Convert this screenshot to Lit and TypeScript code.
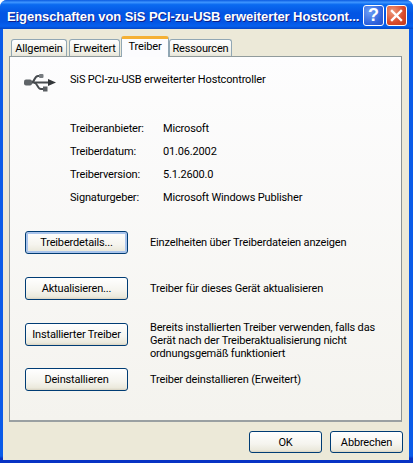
import { LitElement, html, css, svg } from "lit";
import { customElement } from "lit/decorators.js";

const usb = svg`<svg class="usb" width="32" height="20" viewBox="0 0 32 20">
  <g fill="none" stroke="#474b4f" stroke-width="2">
    <path d="M6 8.5H27"/>
    <path d="M7 8.5C11 8.5 10 2 14 2H17"/>
    <path d="M10 8.5C14 9 13 15 17 15H20"/>
  </g>
  <rect x="0" y="5.5" width="8" height="6" rx="2" fill="#5f6468"/>
  <rect x="15" y="0" width="4.5" height="4" rx="1" fill="#777c80"/>
  <rect x="19" y="12.5" width="4.5" height="5" fill="#5a5e62"/>
  <path d="M24 5L32 8.5L24 12Z" fill="#33373a"/>
</svg>`;

@customElement("app-root")
export class AppRoot extends LitElement {
  static styles = css`
    :host { display: block; width: 413px; height: 463px; overflow: hidden; background: #fff; }
    .window {
      width: 413px; height: 463px; box-sizing: border-box; display: flex; flex-direction: column;
      border-radius: 7px 7px 0 0; overflow: hidden;
      background: linear-gradient(180deg, #0a5be8 0%, #0a5be8 98.5%, #0733c4 99%);
      font: 11px Roboto, "Liberation Sans", Arial, sans-serif; letter-spacing: -0.16px; color: #000;
    }
    .title {
      height: 29px; flex: none; display: flex; align-items: center; box-sizing: border-box; padding: 1px 6px 0 7px;
      background: linear-gradient(180deg, #0a5ae0 0%, #3d95ff 8%, #0a6af0 16%, #0355e4 45%, #0355e4 75%, #0660ee 90%, #0346c8 100%);
    }
    .title span {
      flex: 1; min-width: 0; overflow: hidden; color: #fff; font: bold 13px "Liberation Sans", Arial, sans-serif; letter-spacing: -0.08px;
      text-shadow: 1px 1px 0 #0f1f8a; white-space: nowrap; padding-top: 3px;
    }
    .cap {
      width: 21px; height: 21px; flex: none; box-sizing: border-box; border: 1px solid #fff; border-radius: 3px;
      display: flex; align-items: center; justify-content: center; margin-left: 2px;
    }
    .help { background: radial-gradient(circle at 30% 30%, #6d9ef5, #2c5fdb 70%, #2a52c8); color: #fff; font: bold 18px "Liberation Sans", sans-serif; }
    .close { background: radial-gradient(circle at 30% 30%, #ee9a7a, #d9492a 60%, #c23a1c); }
    .body {
      flex: 1; display: flex; flex-direction: column; margin: 0 4px 3px 3px; box-sizing: border-box;
      background: #ece9d8; padding: 10px 6px 0 6px;
    }
    .tabs { display: flex; height: 17px; padding-left: 2px; align-items: flex-end; position: relative; z-index: 1; }
    .tab {
      height: 17px; box-sizing: border-box; padding: 2px 0 0; text-align: center; margin-right: 2px;
      border: 1px solid #91a7b4; border-bottom: none; border-radius: 3px 3px 0 0;
      background: linear-gradient(180deg, #fff, #f0efe6 80%, #e6e4d8);
    }
    .tab.on {
      height: 21px; margin-bottom: -1px; margin-left: -1px; margin-right: 0; position: relative;
      background: #fcfcfe; border-top: 3px solid #f5b034; border-color: #f5b034 #91a7b4 #fcfcfe;
      padding-top: 1px;
    }
    .panel {
      width: 393px; height: 366px; flex: none; box-sizing: border-box; border: 1px solid #919b9c; border-right-color: #8a9294; border-bottom: 2px solid #9aa0a2;
      background: linear-gradient(180deg, #fdfdfe 0%, #f4f3ee 100%);
      padding: 15px 0 0 14px; position: relative;
    }
    .device { display: flex; align-items: center; height: 14px; }
    .usb { display: block; margin: 10px 14px 0 0; flex: none; width: 32px; height: 20px; }
    .info { display: grid; grid-template-columns: 93px auto; grid-auto-rows: 23px; margin: 31px 0 0 46px; align-items: center; }
    .actions { display: flex; flex-direction: column; margin: 22px 0 0 1px; }
    .action { display: flex; align-items: center; gap: 22px; }
    .action.a1 { height: 23px; }
    .action.a2 { height: 23px; margin-top: 23px; }
    .action.a3 { height: 39px; margin-top: 21px; align-items: flex-start; }
    .action.a3 .btn { margin-top: 2px; }
    .action.a4 { height: 23px; margin-top: 8px; }
    .btn {
      width: 103px; height: 23px; box-sizing: border-box; flex: none; display: flex; align-items: center; justify-content: center;
      border: 1px solid #003c74; border-radius: 3px; color: #000;
      background: linear-gradient(180deg, #fff 0%, #f5f4ee 60%, #ebe9dc 90%, #d8d3c2 100%);
    }
    .btn.def { box-shadow: inset 0 0 0 2px #a9c4ec; }
    .desc { line-height: 13px; width: 245px; }
    .foot { display: flex; justify-content: flex-end; gap: 8px; padding: 9px 0 0 0; }
    .foot .btn { width: 73px; height: 22px; }
  `;

  render() {
    return html`<div class="window">
      <div class="title">
        <span>Eigenschaften von SiS PCI-zu-USB erweiterter Hostcont...</span>
        <div class="cap help">?</div>
        <div class="cap close">
          <svg width="13" height="13" viewBox="0 0 13 13"><path d="M2 2L11 11M11 2L2 11" stroke="#fff" stroke-width="2.4" stroke-linecap="square"/></svg>
        </div>
      </div>
      <div class="body">
        <div class="tabs">
          <div class="tab" style="width:56px">Allgemein</div>
          <div class="tab" style="width:51px">Erweitert</div>
          <div class="tab on" style="width:48px">Treiber</div>
          <div class="tab" style="width:63px">Ressourcen</div>
        </div>
        <div class="panel">
          <div class="device">${usb}<span>SiS PCI-zu-USB erweiterter Hostcontroller</span></div>
          <div class="info">
            <div>Treiberanbieter:</div><div>Microsoft</div>
            <div>Treiberdatum:</div><div>01.06.2002</div>
            <div>Treiberversion:</div><div>5.1.2600.0</div>
            <div>Signaturgeber:</div><div>Microsoft Windows Publisher</div>
          </div>
          <div class="actions">
            <div class="action a1"><div class="btn def">Treiberdetails...</div><div class="desc">Einzelheiten über Treiberdateien anzeigen</div></div>
            <div class="action a2"><div class="btn">Aktualisieren...</div><div class="desc">Treiber für dieses Gerät aktualisieren</div></div>
            <div class="action a3"><div class="btn">Installierter Treiber</div><div class="desc">Bereits installierten Treiber verwenden, falls das Gerät nach der Treiberaktualisierung nicht ordnungsgemäß funktioniert</div></div>
            <div class="action a4"><div class="btn">Deinstallieren</div><div class="desc">Treiber deinstallieren (Erweitert)</div></div>
          </div>
        </div>
        <div class="foot"><div class="btn">OK</div><div class="btn">Abbrechen</div></div>
      </div>
    </div>`;
  }
}
